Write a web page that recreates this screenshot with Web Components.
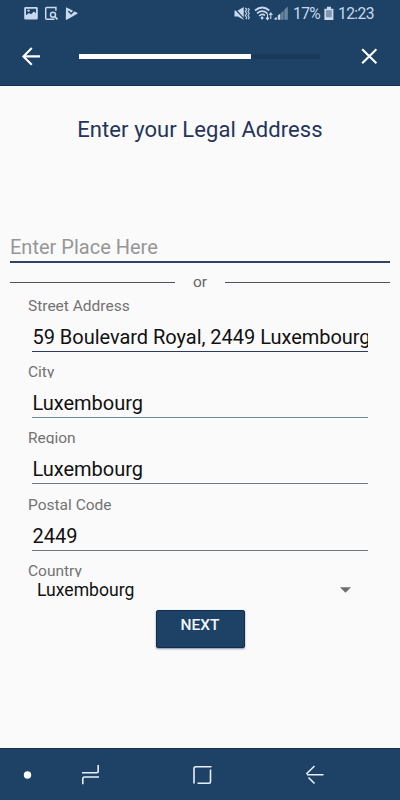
<!DOCTYPE html>
<html lang="en">
<head>
<meta charset="utf-8">
<title>Legal Address</title>
<style>
html, body { margin: 0; height: 100%; }
body { font-family: Roboto, "Liberation Sans", sans-serif; background: #fafafa; overflow: hidden; }
</style>
</head>
<body>
<address-screen></address-screen>
<script>
function define(name, html) {
  const template = document.createElement('template');
  template.innerHTML = html;
  customElements.define(name, class extends HTMLElement {
    constructor() {
      super();
      this.attachShadow({ mode: 'open' }).append(template.content.cloneNode(true));
    }
  });
}

define('status-bar', `
<style>
:host { display: flex; height: 28px; box-sizing: border-box; padding: 0 25px 0 24px; align-items: center; color: #c8d9ef; font-size: 16px; line-height: 28px; }
svg { display: block; flex: none; fill: currentColor; }
.sp { flex: 1; }
.pct { margin-left: 4px; width: 27px; font-size: 15.6px; white-space: nowrap; letter-spacing: -.6px; }
.time { margin-left: 4px; width: 37px; font-size: 15.6px; white-space: nowrap; letter-spacing: -.6px; }
</style>
<svg width="54" height="28" viewBox="0 0 54 28">
  <path fill-rule="evenodd" d="M1.500 7h11q1.300 0 1.300 1.300v10q0 1.300-1.300 1.300h-11Q.2 19.600.2 18.300v-10Q.2 7 1.500 7zM2 8.700v6.500l3-2.300 2 1.300 3-2.700 2 1.800V8.700z"/>
  <circle cx="4.500" cy="10.600" r="1.200"/>
  <path d="M30.500 19.200h-7.800q-1 0-1-1V8.400q0-1 1-1h9.200v3.400" fill="none" stroke="currentColor" stroke-width="1.500"/>
  <circle cx="29" cy="14.800" r="2.500" fill="none" stroke="currentColor" stroke-width="1.500"/>
  <path d="M30.800 16.700l2.700 2.700" stroke="currentColor" stroke-width="1.700"/>
  <path d="M42 7.200l11.300 5.600q.6.500 0 1L42.800 19.700q-1 .3-1-.7z"/>
  <path d="M44.400 10.900l2.700 2.900 5-5.300" fill="none" stroke="#1e4265" stroke-width="1.400"/>
</svg>
<span class="sp"></span>
<svg width="56" height="28" viewBox="0 0 56 28">
  <path d="M1.500 10.500h3.300L10.700 7v12.700L4.800 16.500H1.500z"/>
  <path d="M.8 7.500l10.500 11.300" stroke="#1e4265" stroke-width="1.200"/>
  <path d="M12.300 8l1.500 1.500-1.500 2 1.500 2-1.500 2 1.500 2-1 1.700M15 8l1.300 1.500-1.300 2 1.300 2-1.300 2 1.300 2-1 1.700" fill="none" stroke="currentColor" stroke-width="1.100"/>
  <path d="M22 10.500q7.200-6 14.300 0M24 13.300q5.200-4.400 10.300 0M26.200 15.800q3-2.500 5.800-.4" fill="none" stroke="currentColor" stroke-width="1.700"/>
  <circle cx="29.100" cy="18" r="1.400"/>
  <path d="M34.500 19.500v-6M32.900 17.600l1.600 2 1.600-2M37.800 13v6M36.200 15l1.600-2 1.600 2" fill="none" stroke="currentColor" stroke-width="1.100"/>
  <path d="M41.500 19.700v-1.500l2.300-1.200v2.700z"/><path d="M44.800 19.700v-4.200l2.600-1.900v6.100z"/>
  <path d="M48.200 19.700v-7l2.400-2v9zM51.300 19.700V9.700l3.500-3.200v13.200z" opacity=".45"/>
</svg>
<span class="pct">17%</span>
<svg width="10" height="28" viewBox="0 0 10 28" style="margin-left:4px">
  <path d="M3 6.800h4v2h2.400v11.300H.4V8.800H3z"/>
  <path d="M2 10.200h5.800v7H2z" fill="#8194ab"/>
</svg>
<span class="time">12:23</span>`);

define('progress-line', `
<style>
:host { display: block; width: 241px; height: 5px; background: #1b3a59; }
i { display: block; width: 172.500px; height: 5px; background: #fff; }
</style><i></i>`);

define('app-bar', `
<style>
:host { display: block; height: 86px; background: #1e4265; box-sizing: border-box; border-bottom: 1px solid #14304f; }
.tools { display: flex; height: 56px; align-items: center; padding: 0 22px 0 21px; }
svg { display: block; flex: none; fill: none; stroke: #fff; stroke-width: 2.100; }
progress-line { margin: 0 40.500px 0 37.500px; }
</style>
<status-bar></status-bar>
<div class="tools">
  <svg width="20" height="20" viewBox="0 0 20 20"><path d="M19 10.400H2.500M10.800 2L2.400 10.400l8.400 8.400"/></svg>
  <progress-line></progress-line>
  <svg width="18" height="20" viewBox="0 0 18 20"><path d="M2.200 3.200l14.200 14M16.400 3.200l-14.200 14"/></svg>
</div>`);

define('place-input', `
<style>
:host { display: block; height: 30px; margin: 0 10px; border-bottom: 2px solid #373f63; color: #969696; font-size: 20px; line-height: 32px; }
</style><slot></slot>`);

define('or-divider', `
<style>
:host { display: flex; align-items: center; height: 38px; margin: 0 10px; color: #666; font-size: 15.500px; }
i { flex: 1; height: 1px; background: #515155; }
span { width: 50px; text-align: center; line-height: 38px; }
</style><i></i><span><slot></slot></span><i></i>`);

define('form-field', `
<style>
:host { display: block; height: 66.200px; margin: 0 32px 0 28px; }
.label { height: 16px; overflow: hidden; color: #737373; font-size: 15.500px; line-height: 20px; white-space: nowrap; }
.value { height: 39px; margin-left: 4px; border-bottom: 1px solid var(--line, #6d7885); overflow: hidden; color: #111; font-size: 20px; line-height: 50px; white-space: nowrap; letter-spacing: -.03px; text-indent: .5px; }
</style>
<div class="label"><slot name="label"></slot></div>
<div class="value"><slot></slot></div>`);

define('country-select', `
<style>
:host { display: block; height: 49.200px; margin: 0 49px 0 28px; }
.label { height: 16px; overflow: hidden; color: #737373; font-size: 15.500px; line-height: 20px; }
.row { display: flex; align-items: center; justify-content: space-between; height: 27px; padding-left: 9px; font-size: 17.600px; line-height: 28px; color: #111; }
svg { display: block; fill: #6e6e6e; }
</style>
<div class="label"><slot name="label"></slot></div>
<div class="row"><slot></slot><svg width="11" height="6" viewBox="0 0 11 6"><path d="M0 .3h11L5.500 5.800z"/></svg></div>`);

define('next-button', `
<style>
:host { display: block; width: 89px; height: 38px; margin: 0 auto; box-sizing: border-box; border: 1px solid #102d4d; border-radius: 2px; background: #1e4265; color: #f2f7ff; text-align: center; font-weight: 500; font-size: 15.500px; line-height: 28px; box-shadow: 0 1px 2px rgba(20,40,80,.5); }
</style><slot></slot>`);

define('nav-bar', `
<style>
:host { display: block; height: 52px; box-sizing: border-box; border-top: 1px solid #14304f; background: #1e4265; }
svg { display: block; fill: none; stroke: #e6efff; stroke-width: 1.600; }
</style>
<svg width="400" height="51" viewBox="0 749 400 51">
  <circle cx="27.500" cy="775" r="3.700" fill="#fff" stroke="none"/>
  <path d="M82 772.800h14.500q1.700 0 1.700-1.700V765M99 777H84.500q-1.700 0-1.700 1.700v5.500"/>
  <path d="M211.500 766.800h-15.800q-1.700 0-1.700 1.700v15M197.500 783.300h11.300q1.700 0 1.700-1.700V769.500"/>
  <path d="M323.500 774.700H307M314.500 766l-8.200 8M308.500 777.500l6 6"/>
</svg>`);

define('address-screen', `
<style>
:host { display: flex; flex-direction: column; height: 800px; width: 400px; background: #fafafa; }
main { flex: 1; display: flex; flex-direction: column; min-height: 0; }
h1 { margin: 29px 0 86px; height: 30px; text-align: center; color: #25345a; font-weight: 400; font-size: 22px; line-height: 30px; letter-spacing: .07px; white-space: nowrap; }
main > * { flex: none; }
.fields { margin-top: -5px; }
</style>
<app-bar></app-bar>
<main>
  <h1>Enter your Legal Address</h1>
  <place-input>Enter Place Here</place-input>
  <or-divider>or</or-divider>
  <div class="fields">
    <form-field style="--line:#2d3b60"><span slot="label">Street Address</span>59 Boulevard Royal, 2449 Luxembourg</form-field>
    <form-field style="--line:#73899c"><span slot="label">City</span>Luxembourg</form-field>
    <form-field><span slot="label">Region</span>Luxembourg</form-field>
    <form-field><span slot="label">Postal Code</span>2449</form-field>
    <country-select><span slot="label">Country</span>Luxembourg</country-select>
  </div>
  <next-button>NEXT</next-button>
</main>
<nav-bar></nav-bar>`);
</script>
</body>
</html>
